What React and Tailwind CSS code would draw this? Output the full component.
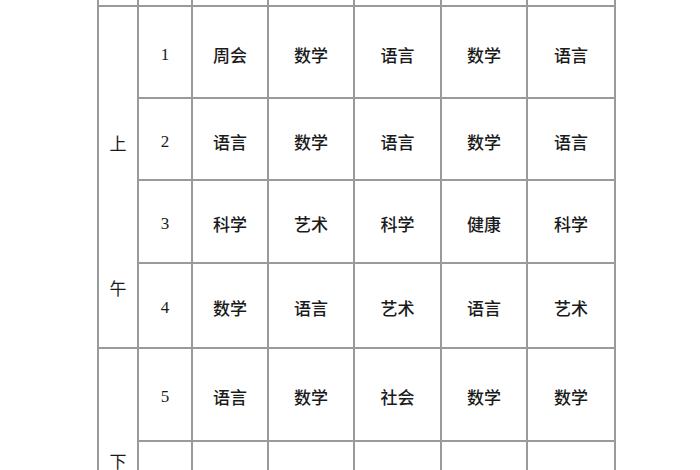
import React from "react";

const rows = [
  { no: "1", h: "h-[92px]", subjects: ["周会", "数学", "语言", "数学", "语言"] },
  { no: "2", h: "h-[82px]", subjects: ["语言", "数学", "语言", "数学", "语言"] },
  { no: "3", h: "h-[83px]", subjects: ["科学", "艺术", "科学", "健康", "科学"] },
  { no: "4", h: "h-[85px]", subjects: ["数学", "语言", "艺术", "语言", "艺术"] },
  { no: "5", h: "h-[93px]", subjects: ["语言", "数学", "社会", "数学", "数学"] },
  { no: "", h: "h-[60px]", subjects: ["", "", "", "", ""] },
];

const cell = "border-2 border-[#9a9a9a] p-0 text-center align-middle";
const cjk = { fontFamily: '"Noto Sans CJK SC", "Noto Sans", sans-serif' };

export default function App() {
  return (
    <div className="w-[700px] h-[470px] overflow-hidden bg-white text-[#1a1a1a]">
      <table
        className="ml-[97px] table-fixed border-collapse text-[17px] font-medium"
        style={cjk}
      >
        <colgroup>
          <col className="w-[40px]" />
          <col className="w-[54px]" />
          <col className="w-[76px]" />
          <col className="w-[86px]" />
          <col className="w-[87px]" />
          <col className="w-[86px]" />
          <col className="w-[88px]" />
        </colgroup>
        <tbody>
          {/* header row, cut off by the top edge */}
          <tr className="h-[6px]">
            {Array(7)
              .fill(0)
              .map((_, i) => (
                <td key={i} className="border-2 border-t-0 border-[#9a9a9a] p-0" />
              ))}
          </tr>
          {rows.map((row, i) => (
            <tr key={i} className={row.h}>
              {i === 0 && (
                <td rowSpan={4} className={`${cell} align-top font-normal`}>
                  <div className="flex flex-col items-center pt-[124px] leading-[24px]">
                    <span>上</span>
                    <span className="mt-[121px]">午</span>
                  </div>
                </td>
              )}
              {i === 4 && (
                <td rowSpan={2} className={`${cell} align-top font-normal`}>
                  <div className="pt-[100px] leading-[24px]">下</div>
                </td>
              )}
              <td
                className={`${cell} pt-[5px] text-[17px] font-normal`}
                style={{ fontFamily: '"Liberation Serif", serif' }}
              >
                {row.no}
              </td>
              {row.subjects.map((s, j) => (
                <td key={j} className={`${cell} pt-[5px]`}>
                  {s}
                </td>
              ))}
            </tr>
          ))}
        </tbody>
      </table>
    </div>
  );
}
